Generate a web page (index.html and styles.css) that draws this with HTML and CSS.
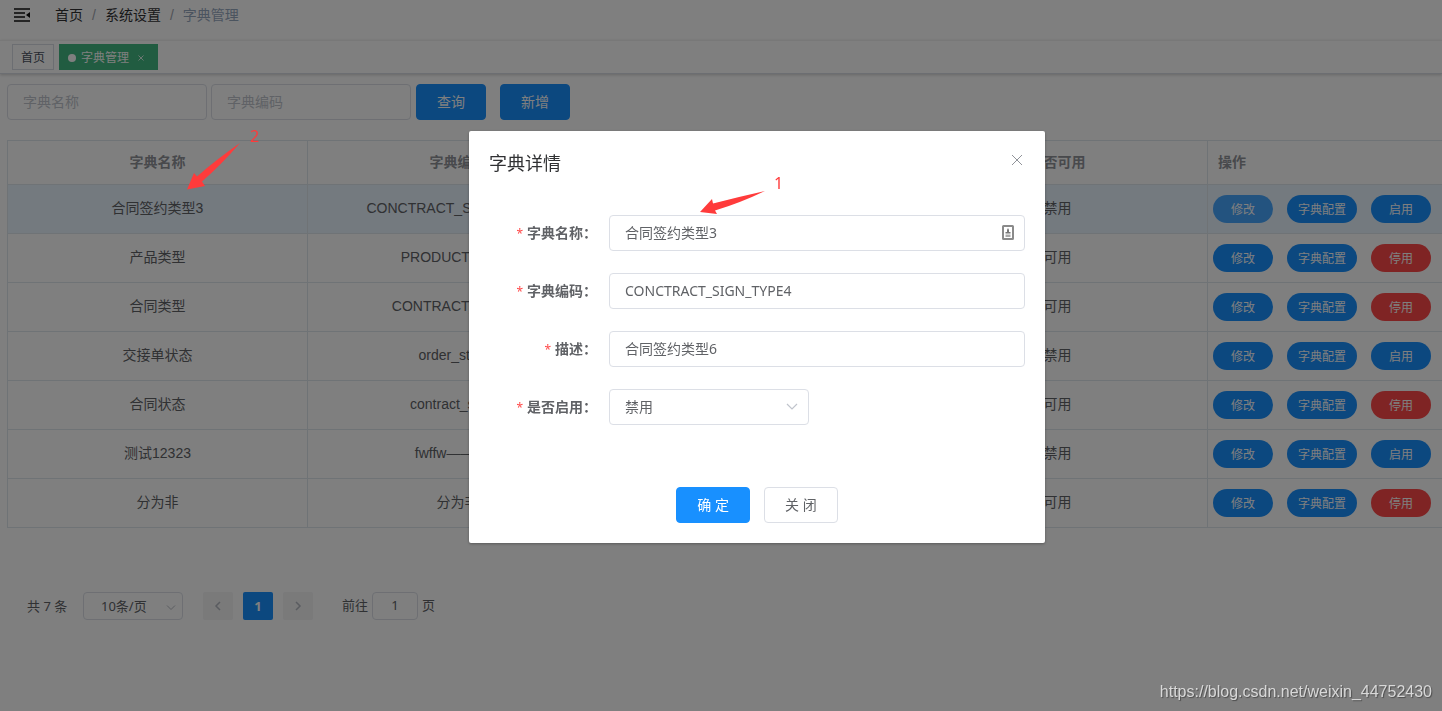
FILE: index.html
```html
<!DOCTYPE html>
<html lang="zh-CN">
<head>
<meta charset="utf-8">
<title>字典管理</title>
<link rel="stylesheet" href="styles.css">
</head>
<body>
<header class="navbar">
  <button class="hamburger" type="button" aria-label="菜单">
    <svg width="18" height="16" viewBox="0 0 18 16"><path d="M1 2h16M1 6h11M1 10h11M1 14h16" stroke="#111" stroke-width="1.500" fill="none"/><path d="M17 5v6l-4-3z" fill="#111"/></svg>
  </button>
  <nav class="breadcrumb"><a href="#">首页</a><span class="sep">/</span><a href="#">系统设置</a><span class="sep">/</span><span class="current">字典管理</span></nav>
</header>
<div class="tags">
  <a class="tag" href="#">首页</a>
  <a class="tag active" href="#"><i class="dot"></i>字典管理<svg class="tag-close" width="6" height="6" viewBox="0 0 6 6"><path d="M.5.5l5 5M5.500.5l-5 5" stroke="#fff" stroke-width=".8"/></svg></a>
</div>
<main class="page">
  <form class="filters">
    <input class="field" type="text" placeholder="字典名称">
    <input class="field" type="text" placeholder="字典编码">
    <div class="filter-buttons">
      <button class="btn primary" type="button">查询</button>
      <button class="btn primary" type="button">新增</button>
    </div>
  </form>
  <table class="grid">
    <colgroup><col class="col"><col class="col"><col class="col"><col class="col"><col></colgroup>
    <thead><tr><th>字典名称</th><th>字典编码</th><th></th><th>是否可用</th><th class="ops-head">操作</th></tr></thead>
    <tbody>
      <tr class="current-row"><td>合同签约类型3</td><td>CONCTRACT_SIGN_TYPE4</td><td></td><td>禁用</td><td><div class="ops"><button class="pill light" type="button">修改</button><button class="pill" type="button">字典配置</button><button class="pill" type="button">启用</button></div></td></tr>
      <tr><td>产品类型</td><td>PRODUCT_TYPE</td><td></td><td>可用</td><td><div class="ops"><button class="pill" type="button">修改</button><button class="pill" type="button">字典配置</button><button class="pill danger" type="button">停用</button></div></td></tr>
      <tr><td>合同类型</td><td>CONTRACT_TYPES</td><td></td><td>可用</td><td><div class="ops"><button class="pill" type="button">修改</button><button class="pill" type="button">字典配置</button><button class="pill danger" type="button">停用</button></div></td></tr>
      <tr><td>交接单状态</td><td>order_status</td><td></td><td>禁用</td><td><div class="ops"><button class="pill" type="button">修改</button><button class="pill" type="button">字典配置</button><button class="pill" type="button">启用</button></div></td></tr>
      <tr><td>合同状态</td><td>contract_status</td><td></td><td>可用</td><td><div class="ops"><button class="pill" type="button">修改</button><button class="pill" type="button">字典配置</button><button class="pill danger" type="button">停用</button></div></td></tr>
      <tr><td>测试12323</td><td>fwffw———f_</td><td></td><td>禁用</td><td><div class="ops"><button class="pill" type="button">修改</button><button class="pill" type="button">字典配置</button><button class="pill" type="button">启用</button></div></td></tr>
      <tr><td>分为非</td><td>分为非</td><td></td><td>可用</td><td><div class="ops"><button class="pill" type="button">修改</button><button class="pill" type="button">字典配置</button><button class="pill danger" type="button">停用</button></div></td></tr>
    </tbody>
  </table>
  <div class="pager">
    <span class="total">共 7 条</span>
    <span class="select size-select"><select aria-label="每页条数"><option>10条/页</option></select><svg width="10" height="6" viewBox="0 0 10 6"><path d="M1 .5l4 4 4-4" stroke="#b4b8c0" fill="none"/></svg></span>
    <div class="pages">
      <button class="page-btn" type="button" aria-label="上一页" disabled><svg width="8" height="10" viewBox="0 0 8 10"><path d="M6 1L2 5l4 4" stroke="#b4b8c0" stroke-width="1.500" fill="none"/></svg></button>
      <button class="page-btn on" type="button">1</button>
      <button class="page-btn" type="button" aria-label="下一页" disabled><svg width="8" height="10" viewBox="0 0 8 10"><path d="M2 1l4 4-4 4" stroke="#b4b8c0" stroke-width="1.500" fill="none"/></svg></button>
    </div>
    <label class="jump">前往<input type="text" value="1">页</label>
  </div>
</main>

<div class="overlay">
  <section class="dialog" role="dialog">
    <header class="dialog-head"><h2>字典详情</h2><button class="close" type="button" aria-label="关闭"><svg width="12" height="12" viewBox="0 0 12 12"><path d="M1 1l10 10M11 1L1 11" stroke="#909399"/></svg></button></header>
    <form class="dialog-form">
      <div class="row"><label for="name"><i>*</i>字典名称<span class="colon">：</span></label><div class="control"><input class="field" id="name" type="text" value="合同签约类型3"><svg class="autofill" width="12" height="16" viewBox="0 0 12 16"><rect x="1" y="1" width="10" height="13" rx=".5" fill="#fff" stroke="#8a8a8a" stroke-width="2"/><path d="M6 3l1 2v2h1.500v1.500h-5V7H5V5z" fill="#777"/><path d="M3.500 9.500h5v2.500h-5z" fill="#aaa"/></svg></div></div>
      <div class="row"><label for="code"><i>*</i>字典编码<span class="colon">：</span></label><div class="control"><input class="field" id="code" type="text" value="CONCTRACT_SIGN_TYPE4"></div></div>
      <div class="row"><label for="desc"><i>*</i>描述<span class="colon">：</span></label><div class="control"><input class="field" id="desc" type="text" value="合同签约类型6"></div></div>
      <div class="row"><label for="state"><i>*</i>是否启用<span class="colon">：</span></label><span class="select state-select"><select id="state"><option>禁用</option></select><svg width="12" height="8" viewBox="0 0 12 8"><path d="M1 1l5 5 5-5" stroke="#c0c4cc" stroke-width="1.200" fill="none"/></svg></span></div>
    </form>
    <footer class="dialog-foot"><button class="btn primary" type="button">确 定</button><button class="btn" type="button">关 闭</button></footer>
  </section>
</div>

<svg class="arrow arrow-two" width="54" height="48" viewBox="0 0 54 48"><path d="M53 0Q34 22 15 38.500L18 43 0 46.500 7 30l3 3.500Q30 16 53 0z" fill="#ff3b3b"/></svg>
<span class="mark mark-two">2</span>
<svg class="arrow arrow-one" width="66" height="24" viewBox="0 0 66 24"><path d="M65 0Q40 12 15 19.500L17 23 0 21 12 8l1 4.500Q38 6 65 0z" fill="#ff3b3b"/></svg>
<span class="mark mark-one">1</span>
<span class="watermark">https://blog.csdn.net/weixin_44752430</span>
</body>
</html>
```
FILE: styles.css
```css
* { box-sizing: border-box; }
body {
  margin: 0;
  min-height: 100vh;
  background: #fff;
  color: #606266;
  font: 14px/20px "Liberation Sans", "Noto Sans CJK SC", sans-serif;
  overflow: hidden;
}
a { color: inherit; text-decoration: none; }
i { font-style: normal; }
svg { display: block; flex: none; }
button, input, select { font: inherit; color: inherit; }

.navbar {
  display: flex;
  align-items: center;
  height: 40px;
  padding: 0 13px 10px;
  gap: 24px;
}
.hamburger { padding: 0; border: 0; background: none; }
.breadcrumb { display: flex; color: #303133; }
.breadcrumb .sep { margin: 0 9px; color: #a0a4ac; }
.breadcrumb .current { color: #97a8be; }

.tags {
  display: flex;
  align-items: center;
  gap: 5px;
  height: 34px;
  padding: 0 12px;
  border-top: 1px solid #f0f0f0;
  border-bottom: 1px solid #d8dce5;
  box-shadow: 0 1px 3px rgba(0, 0, 0, .2);
}
.tag {
  display: flex;
  align-items: center;
  height: 26px;
  padding: 2px 8px 0;
  border: 1px solid #d8dce5;
  color: #495060;
  font-size: 12px;
}
.tag.active { background: #42b983; border-color: #42b983; color: #fff; padding-right: 13px; }
.dot { width: 8px; height: 8px; margin-right: 5px; border-radius: 50%; background: #fff; }
.tag-close { margin-left: 9px; }

.page { padding: 10px 0 0 7px; }
.filters { display: flex; gap: 4px; margin-bottom: 20px; }
.filter-buttons { display: flex; gap: 14px; margin-left: 1px; }
.field {
  width: 200px;
  height: 36px;
  padding: 0 15px;
  border: 1px solid #dcdfe6;
  border-radius: 4px;
  background: #fff;
}
.field::placeholder { color: #c0c4cc; opacity: 1; }
.btn {
  height: 36px;
  padding: 0 20px;
  border: 1px solid #dcdfe6;
  border-radius: 4px;
  background: #fff;
}
.btn.primary { background: #1890ff; border-color: #1890ff; color: #fff; }

.grid {
  width: 100%;
  table-layout: fixed;
  border-spacing: 0;
  border-top: 1px solid #dfe6ec;
  border-left: 1px solid #dfe6ec;
}
.col { width: 300px; }
.grid th, .grid td {
  padding: 0 10px 2px;
  border-bottom: 1px solid #dfe6ec;
  border-right: 1px solid #dfe6ec;
  text-align: center;
}
.grid th:last-child, .grid td:last-child { border-right: 0; }
.grid th { height: 44px; color: #909399; }
.grid td { height: 49px; }
.grid .ops-head { text-align: left; }
.grid td:last-child { padding: 0 5px; }
.current-row { background: #e8f4ff; }
.ops { display: flex; gap: 14px; }
.pill {
  flex: none;
  height: 28px;
  min-width: 60px;
  padding: 2px 11px 0;
  border: 0;
  border-radius: 14px;
  background: #1890ff;
  color: #fff;
  font-size: 12px;
}
.pill.light { background: #46a6ff; }
.pill.danger { background: #ff4949; }

.pager {
  display: flex;
  align-items: center;
  margin-top: 64px;
  padding-left: 20px;
  font: 13px/26px "Noto Sans", "Noto Sans CJK SC", sans-serif;
}
.total { width: 56px; }
.select { position: relative; display: block; }
.select select {
  appearance: none;
  width: 100%;
  height: 100%;
  border: 1px solid #dcdfe6;
  border-radius: 4px;
  background: #fff;
}
.select svg { position: absolute; right: 11px; top: 50%; margin-top: -4px; }
.size-select { width: 100px; height: 28px; }
.size-select select { padding: 0 17px 2px; }
.size-select svg { right: 7px; margin-top: -1px; }
.pages { display: flex; gap: 10px; margin: 0 29px 0 20px; }
.page-btn {
  display: flex;
  align-items: center;
  justify-content: center;
  width: 30px;
  height: 28px;
  padding: 0;
  border: 0;
  border-radius: 2px;
  background: #f4f4f5;
}
.page-btn.on { background: #1890ff; color: #fff; font-weight: 700; }
.jump { display: flex; gap: 4px; }
.jump input {
  width: 46px;
  height: 28px;
  padding: 0 2px 2px;
  border: 1px solid #dcdfe6;
  border-radius: 4px;
  background: #fff;
  text-align: center;
}

.overlay {
  position: fixed;
  inset: 0;
  display: flex;
  justify-content: center;
  align-items: flex-start;
  padding: 131px 0 0 72px;
  background: rgba(0, 0, 0, .5);
  font-family: "Noto Sans", "Noto Sans CJK SC", sans-serif;
}
.dialog {
  width: 576px;
  border-radius: 2px;
  background: #fff;
  box-shadow: 0 1px 3px rgba(0, 0, 0, .3);
}
.dialog-head {
  display: flex;
  justify-content: space-between;
  padding: 20px 22px 10px 20px;
}
.dialog-head h2 { margin: 0; color: #303133; font-size: 18px; line-height: 24px; font-weight: 400; }
.close { height: 18px; padding: 0; border: 0; background: none; }
.dialog-form { display: grid; gap: 22px; padding: 30px 20px; }
.row { display: flex; align-items: center; }
.row label { width: 120px; padding-right: 12px; text-align: right; font-weight: 700; white-space: nowrap; }
.row label i { margin-right: 4px; color: #ff4949; font-size: 12px; font-weight: 400; }
.colon { font-family: "Noto Sans CJK TC", sans-serif; }
.control { position: relative; flex: 1; }
.control .field { display: block; width: 100%; padding-bottom: 2px; }
.autofill { position: absolute; right: 11px; top: 10px; }
.state-select { width: 200px; height: 36px; }
.state-select select { padding: 0 15px; }
.dialog-foot { display: flex; justify-content: center; gap: 14px; padding: 32px 0 20px; }

.arrow { position: absolute; }
.arrow-two { left: 187px; top: 143px; }
.arrow-one { left: 700px; top: 191px; }
.mark { position: absolute; color: #ff3b3b; font: 16px/20px "Noto Sans", sans-serif; }
.mark-two { left: 250px; top: 126px; }
.mark-one { left: 774px; top: 173px; }
.watermark {
  position: fixed;
  right: 10px;
  bottom: 9px;
  color: #d8d8d8;
  font-size: 16px;
  text-shadow: 1px 1px 1px rgba(0, 0, 0, .4);
}
```
